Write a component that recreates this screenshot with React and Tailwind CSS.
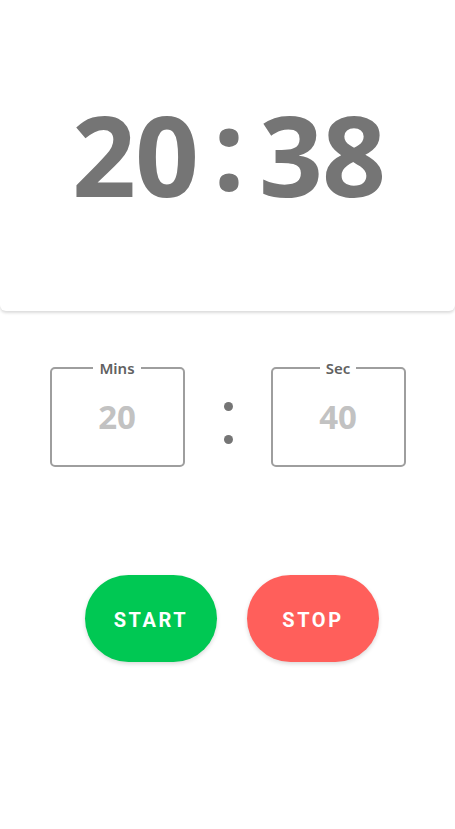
export default function App() {
  return (
    <div className="min-h-screen bg-white" style={{ fontFamily: "'Open Sans', sans-serif" }}>
      <div className="h-[311px] flex items-center justify-center bg-white rounded-b-[6px] shadow-[0_2px_3px_rgba(0,0,0,0.14)]">
        <div className="flex items-center text-[#757575] font-bold text-[112px] leading-none tracking-[-1px] pb-[4px] pl-[2px]">
          <span>20</span>
          <span className="mx-[15px] relative top-[-6px]">:</span>
          <span>38</span>
        </div>
      </div>

      <div className="flex items-center justify-center mt-[48px]">
        <fieldset className="w-[135px] h-[108px] border-2 border-[#9e9e9e] rounded-[5px] px-0 flex flex-col">
          <legend className="mx-auto px-[6px] text-[15px] font-semibold text-[#616161] leading-none pt-[2px]" style={{ fontFamily: "'Noto Sans', sans-serif" }}>
            Mins
          </legend>
          <div className="flex-1 flex items-center justify-center text-[33px] font-bold text-[#c2c2c2] leading-none pb-[8px]">
            20
          </div>
        </fieldset>
        <div className="w-[86px] flex flex-col items-center gap-[24px] pt-[19px] pl-[2px]">
          <span className="w-[9px] h-[9px] rounded-full bg-[#757575]" />
          <span className="w-[9px] h-[9px] rounded-full bg-[#757575]" />
        </div>
        <fieldset className="w-[135px] h-[108px] border-2 border-[#9e9e9e] rounded-[5px] px-0 flex flex-col">
          <legend className="mx-auto px-[6px] text-[15px] font-semibold text-[#616161] leading-none pt-[2px]" style={{ fontFamily: "'Noto Sans', sans-serif" }}>
            Sec
          </legend>
          <div className="flex-1 flex items-center justify-center text-[33px] font-bold text-[#c2c2c2] leading-none pb-[8px]">
            40
          </div>
        </fieldset>
      </div>

      <div className="flex justify-center gap-[30px] mt-[108px] pl-[9px]" style={{ fontFamily: "Roboto, sans-serif" }}>
        <button className="w-[132px] h-[87px] rounded-full bg-[#00c853] text-white font-bold text-[20px] tracking-[2.6px] pt-[2px] shadow-[0_2px_4px_rgba(0,0,0,0.15)]">
          START
        </button>
        <button className="w-[132px] h-[87px] rounded-full bg-[#ff5f5b] text-white font-bold text-[20px] tracking-[2.6px] pt-[2px] shadow-[0_2px_4px_rgba(0,0,0,0.15)]">
          STOP
        </button>
      </div>
    </div>
  );
}
